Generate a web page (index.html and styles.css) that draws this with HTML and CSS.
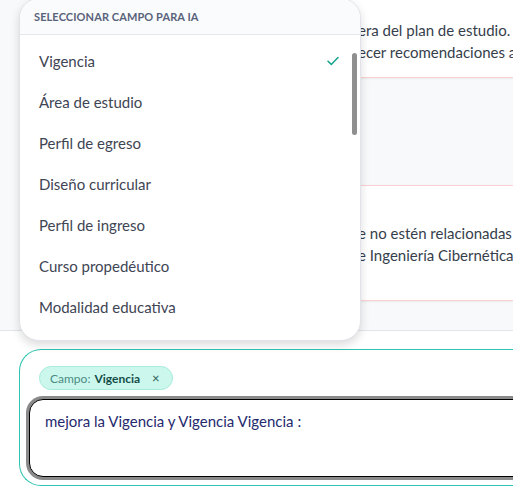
FILE: index.html
```html
<!DOCTYPE html>
<html lang="es">
<head>
    <meta charset="UTF-8">
    <meta name="viewport" content="width=device-width, initial-scale=1.0">
    <title>Asistente de plan de estudio</title>
    <link rel="stylesheet" href="styles.css">
</head>
<body>
    <!-- Chat messages -->
    <div class="chat">
        <div class="msg msg-first">
            <p class="line"><span class="cut">Se revisó la vigencia de la carr</span>era del plan de estudio. Se sugiere</p>
            <p class="line"><span class="cut">con el fin de establ</span>ecer recomendaciones actualizadas</p>
        </div>
        <div class="msg msg-second">
            <p class="line"><span class="cut">Evita incluir asignaturas qu</span>e no estén relacionadas con el</p>
            <p class="line"><span class="cut">perfil de egreso d</span>e Ingeniería Cibernética y sus áreas</p>
        </div>
    </div>

    <!-- Composer -->
    <div class="composer">
        <div class="composer-box">
            <span class="chip">Campo: <strong>Vigencia</strong><button class="chip-x">×</button></span>
            <textarea class="prompt">mejora la Vigencia y Vigencia Vigencia :</textarea>
        </div>
    </div>

    <!-- Field picker menu -->
    <div class="menu">
        <div class="menu-head">SELECCIONAR CAMPO PARA IA</div>
        <ul class="menu-list">
            <li class="selected">Vigencia
                <svg class="check" width="12" height="10" viewBox="0 0 12 10"><path d="M1 5.2l3.3 3.2L11 1.5" fill="none" stroke="#16a38c" stroke-width="1.5" stroke-linecap="round" stroke-linejoin="round"/></svg>
            </li>
            <li>Área de estudio</li>
            <li>Perfil de egreso</li>
            <li>Diseño curricular</li>
            <li>Perfil de ingreso</li>
            <li>Curso propedéutico</li>
            <li>Modalidad educativa</li>
            <li>Duración del programa</li>
            <li>Créditos</li>
        </ul>
        <div class="thumb"></div>
    </div>
</body>
</html>
```

FILE: styles.css
```css
body { margin: 0; font-family: Lato, "Noto Sans", sans-serif; background: #f8f9fb; overflow: hidden; height: 501px; }

.chat { height: 330px; border-bottom: 1px solid #e3e5ea; overflow: hidden; background: #f8f9fb; }
.msg { margin-left: 30px; background: #fff; border: 1px solid #fcd0d0; border-right: 0; box-shadow: 0 1px 2px rgba(0,0,0,.06); color: #363e4c; font-size: 15px; }
.msg-first { margin-top: -10px; padding: 28px 0 14px 16px; }
.msg-second { margin-top: 107px; padding: 36px 0 34px 16px; }
.line { margin: 0; line-height: 22px; white-space: nowrap; }
.cut { display: inline-block; width: 311px; overflow: hidden; vertical-align: bottom; }

.composer { background: #fff; height: 170px; padding: 18px 0 0 19px; box-sizing: border-box; }
.composer-box { border: 1.5px solid #2ec4b0; border-right: 0; border-radius: 22px 0 0 22px; height: 137px; box-sizing: border-box; padding: 16px 0 0 19px; }
.chip { display: inline-flex; align-items: center; height: 24px; padding: 0 12px 0 10px; border-radius: 12px; background: #ccf7ed; border: 1px solid #a8ecdc; box-sizing: border-box; font-size: 12px; color: #4a8b82; }
.chip strong { color: #134e48; margin-left: 4px; font-weight: 700; }
.chip-x { border: 0; background: none; padding: 0; margin-left: 12px; font-size: 13px; color: #2c5a54; line-height: 1; font-family: inherit; }
.prompt { display: block; margin: 9px 0 0 -10px; width: 520px; height: 78px; box-sizing: border-box; resize: none; border: 1px solid #000; border-radius: 14px; box-shadow: 0 0 0 3px #8a8a8a; padding: 12px 15px; font-family: inherit; font-size: 15px; color: #1f2a6e; outline: none; }

.menu { position: absolute; left: 19px; top: -2px; width: 342px; height: 343px; box-sizing: border-box; background: #fff; border: 1px solid #e1e3e8; border-radius: 20px; box-shadow: 0 4px 10px rgba(0,0,0,.14); overflow: hidden; }
.menu-head { height: 36px; box-sizing: border-box; padding: 11px 0 0 14px; background: #fafbfc; border-bottom: 1px solid #e6e8ec; font-size: 11px; font-weight: 700; color: #58627a; letter-spacing: .1px; }
.menu-list { list-style: none; margin: 0; padding: 6px 0 0; }
.menu-list li { position: relative; height: 41px; line-height: 41px; padding-left: 19px; font-size: 15px; color: #3e4554; }
.check { position: absolute; left: 307px; top: 15px; }
.thumb { position: absolute; left: 332px; top: 54px; width: 5px; height: 82px; border-radius: 3px; background: #8f8f8f; }
```
